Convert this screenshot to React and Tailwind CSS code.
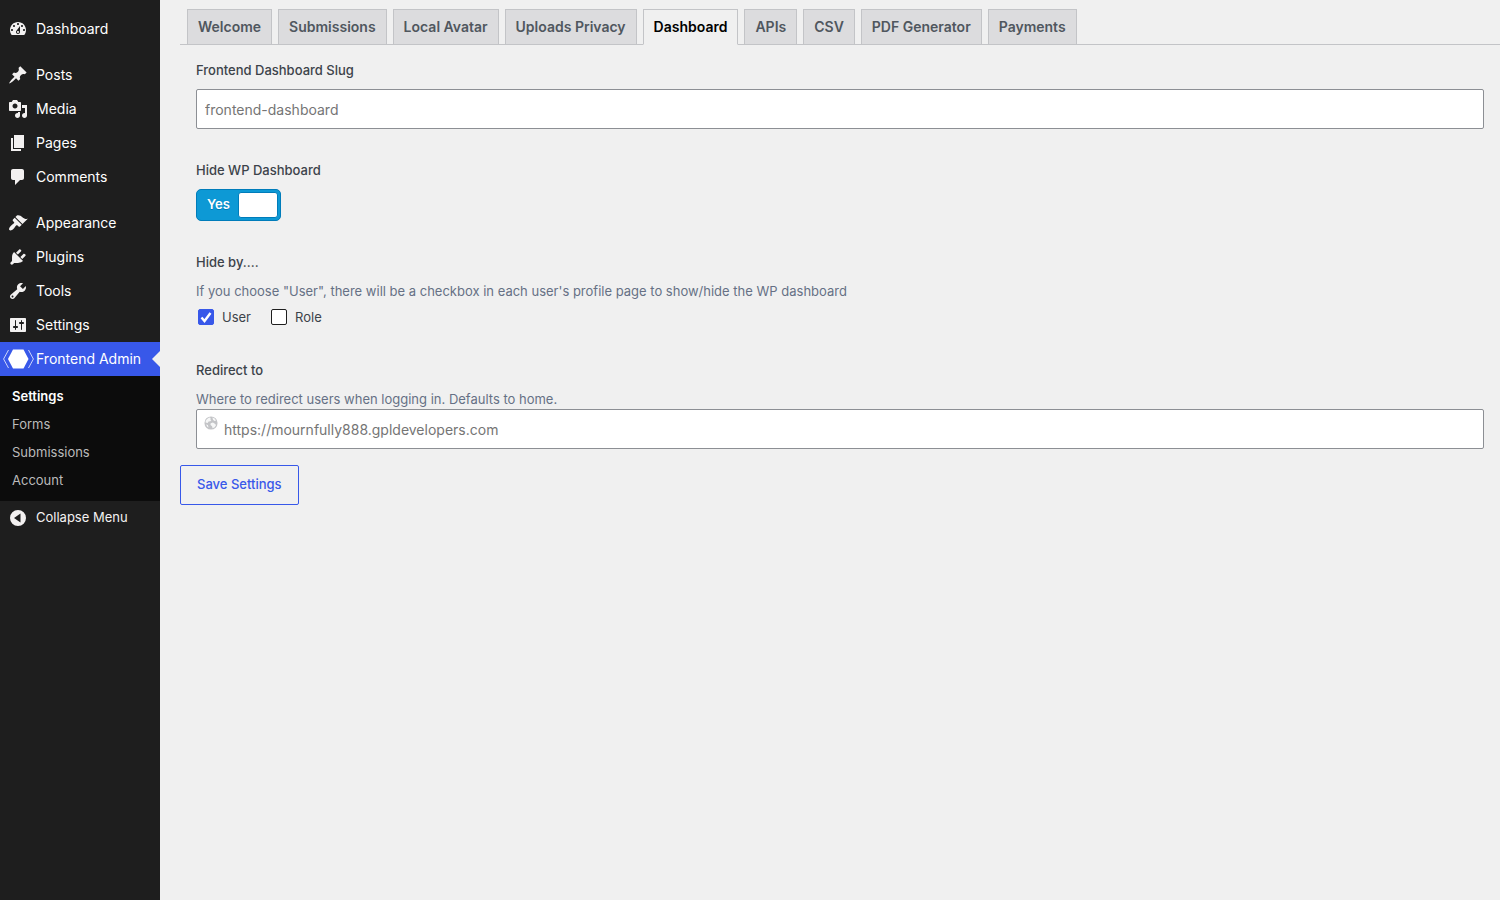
import { useState } from "react";

const icons = {
  dashboard: "M3.76 16h12.48c1.1-1.37 1.76-3.11 1.76-5 0-4.42-3.58-8-8-8s-8 3.58-8 8c0 1.89.66 3.63 1.76 5zM10 4c.55 0 1 .45 1 1s-.45 1-1 1-1-.45-1-1 .45-1 1-1zM6 6c.55 0 1 .45 1 1s-.45 1-1 1-1-.45-1-1 .45-1 1-1zm8 0c.55 0 1 .45 1 1s-.45 1-1 1-1-.45-1-1 .45-1 1-1zm-5.37 5.55L12 7v6c0 1.1-.9 2-2 2s-2-.9-2-2c0-.57.24-1.08.63-1.45zM4 10c.55 0 1 .45 1 1s-.45 1-1 1-1-.45-1-1 .45-1 1-1zm12 0c.55 0 1 .45 1 1s-.45 1-1 1-1-.45-1-1 .45-1 1-1zm-5 3c0-.55-.45-1-1-1s-1 .45-1 1 .45 1 1 1 1-.45 1-1z",
  posts: "M10.44 3.02l1.82-1.82 6.36 6.35-1.83 1.82c-1.05-.68-2.48-.57-3.41.36l-.75.75c-.92.93-1.04 2.35-.35 3.41l-1.83 1.82-2.41-2.41-2.8 2.79c-.42.42-3.38 2.71-3.8 2.29s1.86-3.39 2.28-3.81l2.79-2.79L4.1 9.36l1.83-1.82c1.05.69 2.48.57 3.4-.36l.75-.75c.93-.92 1.05-2.35.36-3.41z",
  media: "M13 11V4c0-.55-.45-1-1-1h-1.67L9 1H5L3.67 3H2c-.55 0-1 .45-1 1v7c0 .55.45 1 1 1h10c.55 0 1-.45 1-1zM7 4.5c1.38 0 2.5 1.12 2.5 2.5S8.38 9.5 7 9.5 4.5 8.38 4.5 7 5.62 4.5 7 4.5zM14 6h5v10.5c0 1.38-1.12 2.5-2.5 2.5S14 17.88 14 16.5s1.12-2.5 2.5-2.5c.17 0 .34.02.5.05V9h-3V6zm-4 8.05V13h2v3.5c0 1.38-1.12 2.5-2.5 2.5S7 17.88 7 16.5 8.12 14 9.5 14c.17 0 .34.02.5.05z",
  pages: "M6 15V2h10v13H6zm-1 1h8v2H3V5h2v11z",
  comments: "M5 2h9c1.1 0 2 .9 2 2v7c0 1.1-.9 2-2 2h-2l-5 5v-5H5c-1.1 0-2-.9-2-2V4c0-1.1.9-2 2-2z",
  appearance: "M14.48 11.06L7.41 3.99l1.5-1.5c.5-.56 2.3-.47 3.51.32 1.21.8 1.43 1.28 2.91 2.1 1.18.64 2.45 1.26 4.45.85zm-.71.71L6.7 4.7 4.93 6.47c-.39.39-.39 1.02 0 1.41l1.06 1.06c.39.39.39 1.03 0 1.42-.6.6-1.43 1.11-2.21 1.69-.35.26-.7.53-1.01.84C1.43 14.23.4 16.08 1.4 17.07c.99 1 2.84-.03 4.18-1.36.31-.31.58-.66.85-1.02.57-.78 1.08-1.61 1.69-2.21.39-.39 1.02-.39 1.41 0l1.06 1.06c.39.39 1.02.39 1.41 0z",
  plugins: "M13.11 4.36L9.87 7.6 8 5.73l3.24-3.24c.35-.34 1.05-.2 1.56.32.52.51.66 1.21.31 1.55zm-8 1.77l.91-1.12 9.01 9.01-1.19.84c-.71.71-2.63 1.16-3.82 1.16H6.14L4.9 17.26c-.59.59-1.54.59-2.12 0-.59-.58-.59-1.53 0-2.12l1.24-1.24v-3.88c0-1.13.4-3.19 1.09-3.89zm7.26 3.97l3.24-3.24c.34-.35 1.04-.21 1.55.31.52.51.66 1.21.31 1.55l-3.24 3.25z",
  tools: "M16.68 9.77c-1.34 1.34-3.3 1.67-4.95.99l-5.41 6.52c-.99.99-2.59.99-3.58 0s-.99-2.59 0-3.57l6.52-5.42c-.68-1.65-.35-3.61.99-4.95 1.28-1.28 3.12-1.62 4.72-1.06l-2.89 2.89 2.82 2.82 2.86-2.87c.53 1.58.18 3.39-1.08 4.65zM3.81 16.21c.4.39 1.04.39 1.43 0 .4-.4.4-1.04 0-1.43-.39-.4-1.03-.4-1.43 0-.39.39-.39 1.03 0 1.43z",
  settings: "M18 16V4c0-.55-.45-1-1-1H3c-.55 0-1 .45-1 1v12c0 .55.45 1 1 1h14c.55 0 1-.45 1-1zM8 11h1c.55 0 1 .45 1 1s-.45 1-1 1H8v1.5c0 .28-.22.5-.5.5s-.5-.22-.5-.5V13H6c-.55 0-1-.45-1-1s.45-1 1-1h1V5.5c0-.28.22-.5.5-.5s.5.22.5.5V11zm5-2h-1c-.55 0-1-.45-1-1s.45-1 1-1h1V5.5c0-.28.22-.5.5-.5s.5.22.5.5V7h1c.55 0 1 .45 1 1s-.45 1-1 1h-1v5.5c0 .28-.22.5-.5.5s-.5-.22-.5-.5V9z",
  collapse: "M10 2a8 8 0 1 0 0 16 8 8 0 0 0 0-16zM12.500 5.500v9L6 10z",
};

const menuGroups = [
  [{ icon: "dashboard", label: "Dashboard" }],
  [
    { icon: "posts", label: "Posts" },
    { icon: "media", label: "Media" },
    { icon: "pages", label: "Pages" },
    { icon: "comments", label: "Comments" },
  ],
  [
    { icon: "appearance", label: "Appearance" },
    { icon: "plugins", label: "Plugins" },
    { icon: "tools", label: "Tools" },
    { icon: "settings", label: "Settings" },
  ],
];

const submenu = ["Settings", "Forms", "Submissions", "Account"];

const tabs = ["Welcome", "Submissions", "Local Avatar", "Uploads Privacy", "Dashboard", "APIs", "CSV", "PDF Generator", "Payments"];

export default function App() {
  const [tab, setTab] = useState("Dashboard");

  return (
    <div className="flex min-h-screen bg-[#f0f0f0] font-['Inter',sans-serif] text-[13px] text-[#3c434a]">
      <Sidebar />
      <main className="flex-1 min-w-0 pl-5">
        <Tabs active={tab} onSelect={setTab} />
        <SettingsForm />
      </main>
    </div>
  );
}

function MenuIcon({ name }) {
  return (
    <svg viewBox="0 0 20 20" className="size-5 shrink-0 fill-[#f3f1f1]" fillRule="evenodd" aria-hidden="true">
      <path d={icons[name]} />
    </svg>
  );
}

function Sidebar() {
  return (
    <nav className="w-40 shrink-0 bg-[#1e1e1e] pt-3 text-white">
      {menuGroups.map((group, i) => (
        <ul key={i} className={i < 2 ? "mb-3" : ""}>
          {group.map(item => (
            <li key={item.label}>
              <a href="#" className="flex h-[34px] items-center gap-2 pl-2 text-sm hover:text-[#7b90ff]">
                <MenuIcon name={item.icon} />
                {item.label}
              </a>
            </li>
          ))}
        </ul>
      ))}

      <a href="#" className="relative flex h-[34px] items-center gap-0.5 bg-[#3858e9] pl-[3px] text-sm">
        <svg viewBox="0 0 31 20" className="h-5 w-[31px] shrink-0" aria-hidden="true">
          <path d="M10 .5h10.500L25.500 10l-5 9.500H10L5 10z" fill="#fff" />
          <path d="M5.500 1L.6 10l4.900 9M25.500 1l4.900 9-4.900 9" fill="none" stroke="#fff" strokeOpacity=".75" />
        </svg>
        Frontend Admin
        <span className="absolute right-0 top-1/2 -translate-y-1/2 border-y-8 border-r-8 border-y-transparent border-r-[#f0f0f0]" />
      </a>

      <ul className="bg-[#0c0c0c] pt-[7px] pb-1.5">
        {submenu.map((label, i) => (
          <li key={label}>
            <a href="#" className={`flex h-7 items-center px-3 ${i === 0 ? "font-semibold text-white" : "text-[#bbbbbb]"}`}>
              {label}
            </a>
          </li>
        ))}
      </ul>

      <button type="button" className="flex h-[34px] w-full items-center gap-2 pl-2 text-[#f3f1f1]">
        <MenuIcon name="collapse" />
        Collapse Menu
      </button>
    </nav>
  );
}

function Tabs({ active, onSelect }) {
  return (
    <div role="tablist" className="flex gap-1.5 border-b border-[#c3c4c7] pt-[9px] pl-[7px]">
      {tabs.map(t => (
        <button
          key={t}
          type="button"
          role="tab"
          aria-selected={t === active}
          onClick={() => onSelect(t)}
          className={`border border-[#c3c4c7] px-2.5 py-[5px] text-sm leading-6 font-semibold whitespace-nowrap ${
            t === active ? "-mb-px border-b-[#f0f0f0] bg-[#f0f0f0] text-black" : "border-b-0 bg-[#dcdcde] text-[#50575e]"
          }`}
        >
          {t}
        </button>
      ))}
    </div>
  );
}

function SettingsForm() {
  const [hide, setHide] = useState(true);

  return (
    <form onSubmit={e => e.preventDefault()}>
      <div className="px-4 pt-[15px]">
        {/* Slug */}
        <div className="mb-[31px]">
          <label htmlFor="slug" className="mb-[9px] block leading-5 font-medium">Frontend Dashboard Slug</label>
          <input
            id="slug"
            type="text"
            placeholder="frontend-dashboard"
            className="block h-10 w-full rounded-xs border border-[#8c8f94] bg-white px-2 text-sm placeholder:text-[#757575]"
          />
        </div>

        {/* Hide toggle */}
        <div className="mb-[31px]">
          <label htmlFor="hide" className="mb-[9px] block leading-5 font-medium">Hide WP Dashboard</label>
          <label className="relative flex h-8 w-[85px] cursor-pointer items-center rounded-[5px] border border-[#007cba] bg-[#0d99d5] p-0.5">
            <input id="hide" type="checkbox" checked={hide} onChange={e => setHide(e.target.checked)} className="peer sr-only" />
            <span className="flex-1 text-center font-semibold text-white text-shadow-[0_1px_0_#007cba]">{hide ? "Yes" : "No"}</span>
            <span className={`h-[26px] w-10 rounded-[3px] border border-[#007cba] bg-white ${hide ? "" : "order-first"}`} />
          </label>
        </div>

        {/* Hide by */}
        <fieldset className="mb-[31px] pb-0.5">
          <legend className="leading-5 font-medium">Hide by....</legend>
          <p className="mt-[9px] mb-1.5 leading-5 text-[#667085]">
            If you choose "User", there will be a checkbox in each user's profile page to show/hide the WP dashboard
          </p>
          <div className="flex gap-5 pl-0.5">
            <CheckOption label="User" defaultChecked />
            <CheckOption label="Role" />
          </div>
        </fieldset>

        {/* Redirect */}
        <div className="mb-4">
          <label htmlFor="redirect" className="mb-[9px] block leading-5 font-medium">Redirect to</label>
          <p className="leading-5 text-[#667085]">Where to redirect users when logging in. Defaults to home.</p>
          <div className="relative">
            <svg viewBox="0 0 16 16" className="absolute top-[7px] left-2 size-[14px]" aria-hidden="true">
              <circle cx="8" cy="8" r="7.500" fill="#c3c4c7" />
              <path d="M3.200 3.600L5.800 1.800l2 .4-.8 1.600 1.400.9-1 1.300-2.200.4-1 1.700-2.400-.6.200-2zM9.600 1.800l2.600 1 1.600 2.400-1.900.4-1.600-1.400zM7.600 8.200l2.600-.8 2.200 1.400 1.400 1.400-1.600 2.600-2.400 1.200-.6-2.400-1.800-1.200zM2.400 9.800l2 .6.800 2.600-1.400-.8z" fill="#f6f7f7" />
            </svg>
            <input
              id="redirect"
              type="url"
              placeholder="https://mournfully888.gpldevelopers.com"
              className="block h-10 w-full rounded-xs border border-[#8c8f94] bg-white pr-2 pl-[27px] text-sm placeholder:text-[#757575]"
            />
          </div>
        </div>
      </div>

      <button type="submit" className="h-10 rounded-xs border border-[#3858e9] px-4 font-medium text-[#3858e9]">
        Save Settings
      </button>
    </form>
  );
}

function CheckOption({ label, defaultChecked }) {
  return (
    <label className="flex items-center gap-2 leading-5">
      <span className="relative flex size-4">
        <input
          type="checkbox"
          defaultChecked={defaultChecked}
          className="peer size-4 appearance-none rounded-xs border border-[#1e1e1e] bg-white checked:border-[#3858e9] checked:bg-[#3858e9]"
        />
        <svg viewBox="0 0 16 16" className="pointer-events-none absolute inset-0 hidden peer-checked:block" aria-hidden="true">
          <path d="M3.500 8.500l3 3.500 6-8" fill="none" stroke="#fff" strokeWidth="2.400" />
        </svg>
      </span>
      {label}
    </label>
  );
}
